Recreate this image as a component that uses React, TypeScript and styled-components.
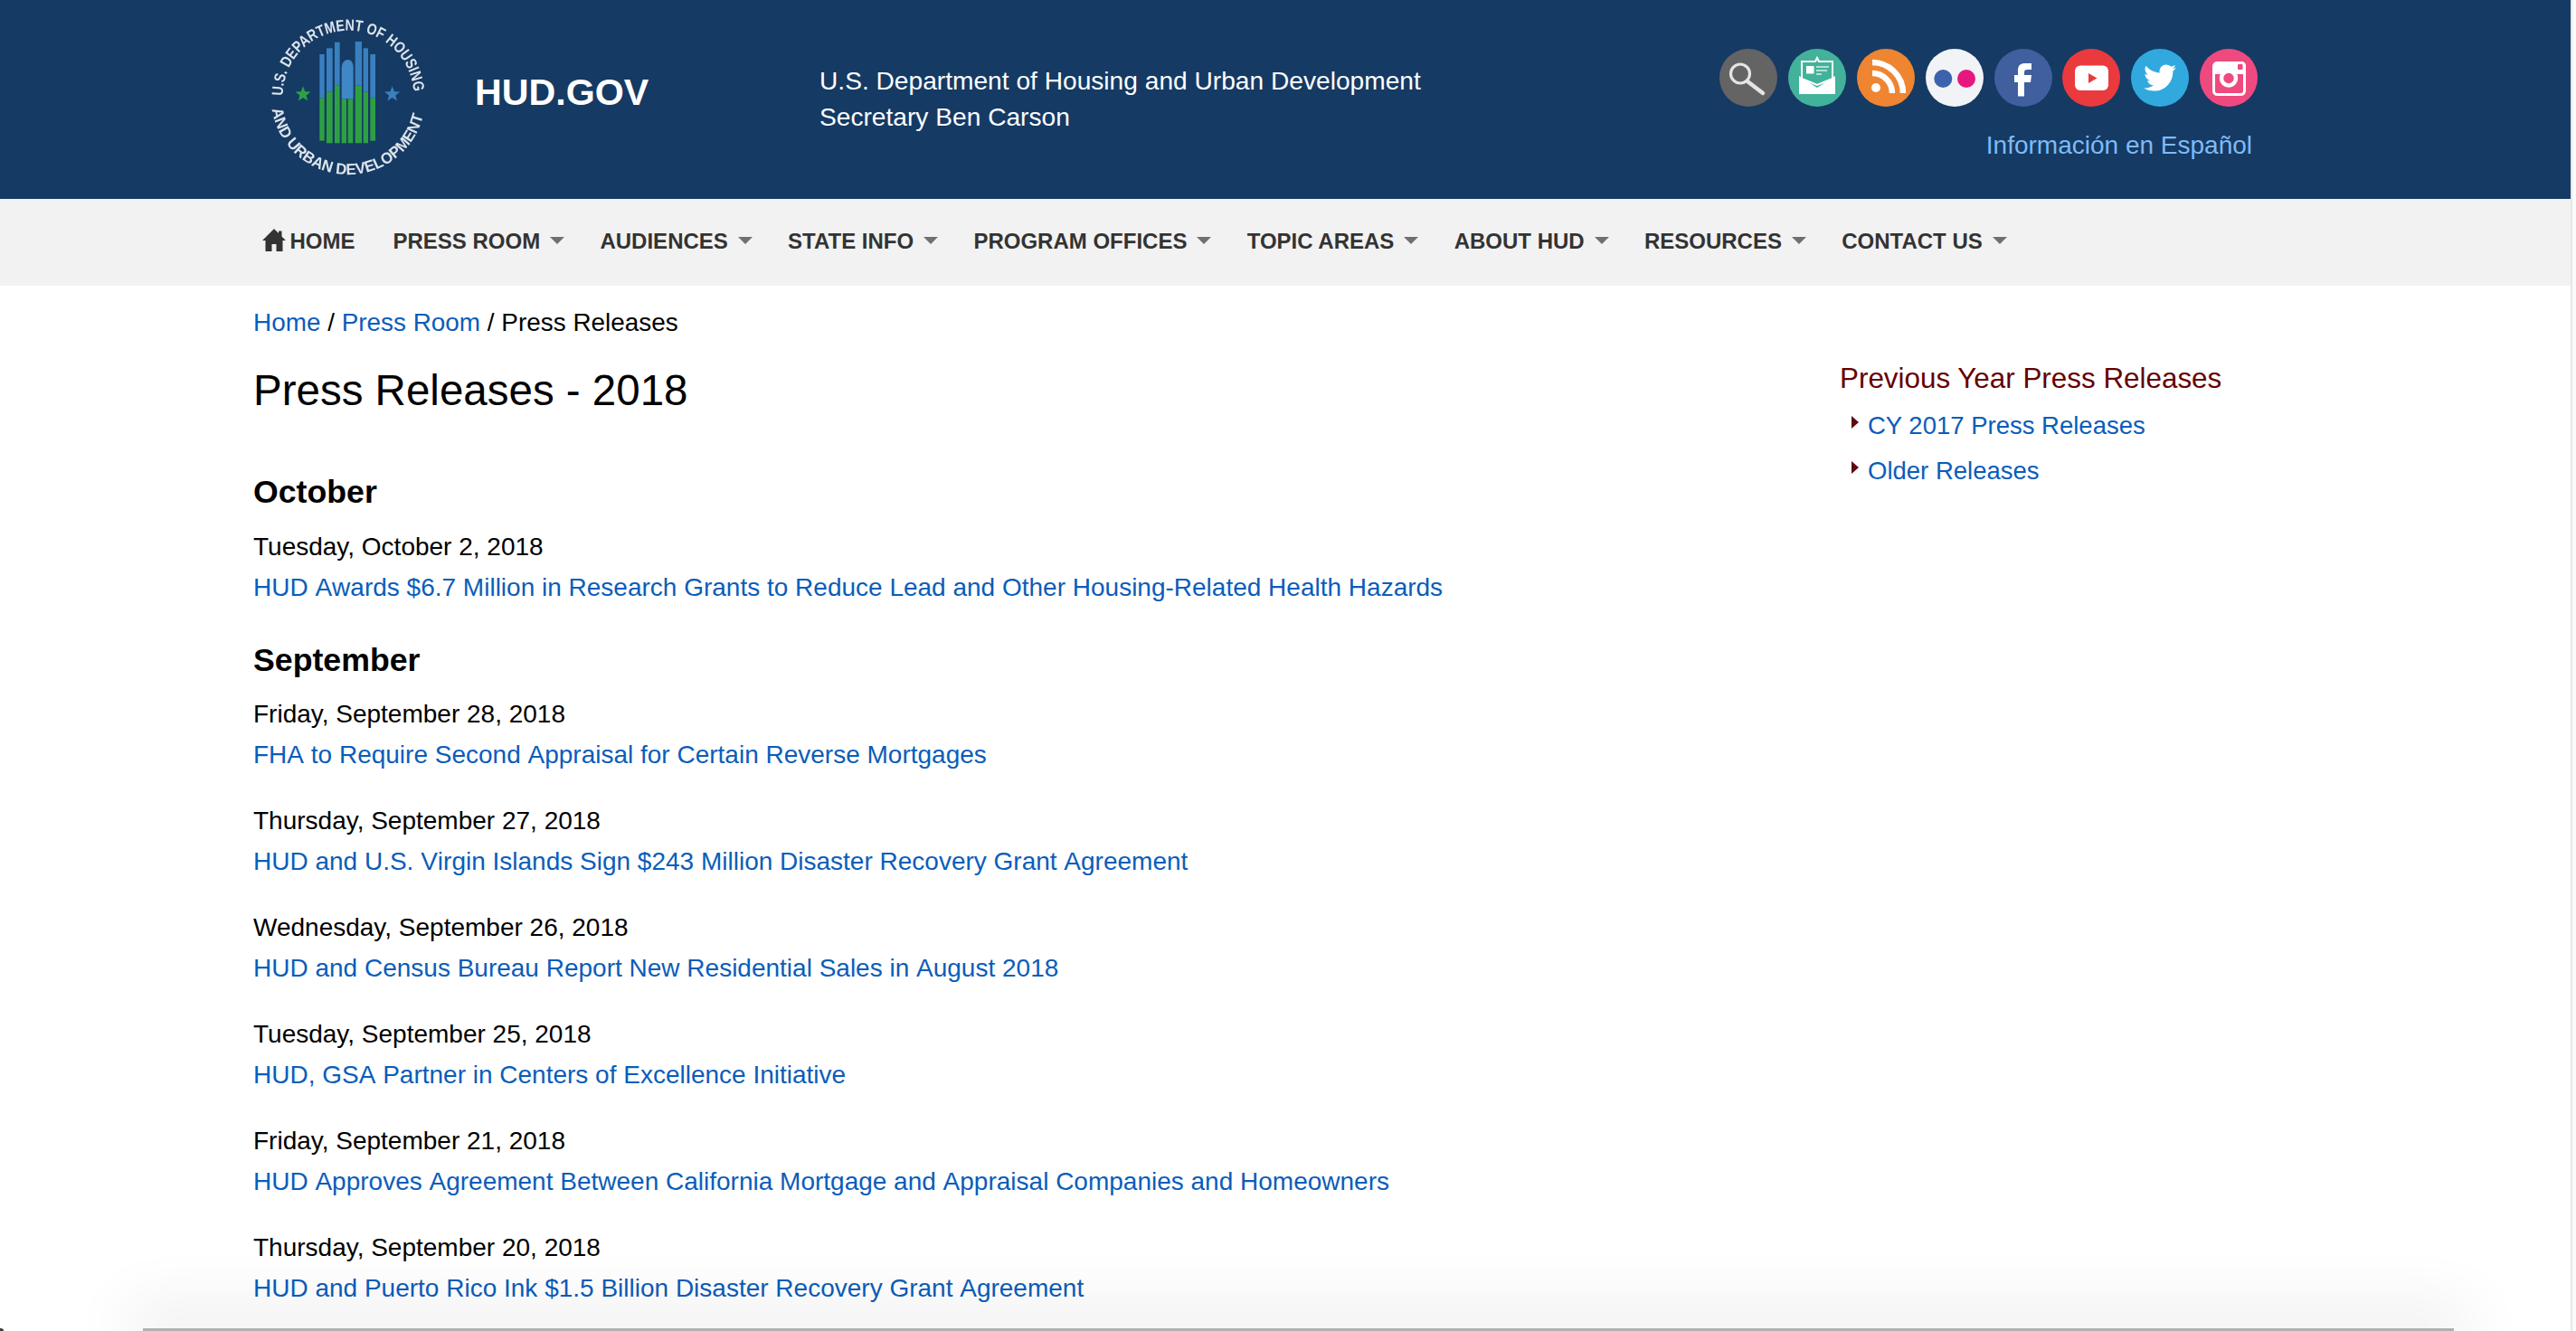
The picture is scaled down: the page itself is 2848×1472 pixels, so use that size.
import React from "react";
import styled, { createGlobalStyle } from "styled-components";
import { FaTwitter } from "react-icons/fa";

const Global = createGlobalStyle`
  html, body { margin: 0; padding: 0; height: 1472px; overflow: hidden; background: #fff; }
  body { font-family: "Liberation Sans", Arial, sans-serif; color: #000; }
  a { text-decoration: none; color: #0a5dba; }
`;

const Shell = styled.div`
  display: flex;
  height: 1472px;
  overflow: hidden;
  position: relative;
`;
const Page = styled.div`
  flex: 1;
  min-width: 0;
`;
const ScrollTrack = styled.div`
  width: 6px;
  box-sizing: border-box;
  border-left: 2px solid #e6e6e6;
  background: #fafafa;
`;
const WindowShadow = styled.div`
  position: absolute;
  left: 158px;
  right: 135px;
  bottom: 0;
  height: 3px;
  background: #b0b0b0;
  box-shadow: 0 -4px 70px 18px rgba(0, 0, 0, 0.09);
  pointer-events: none;
`;
const DesktopCorner = styled.div`
  position: absolute;
  left: 0;
  bottom: 0;
  width: 4px;
  height: 3px;
  background: #4a3a36;
  border-top-right-radius: 4px;
  pointer-events: none;
`;

const Header = styled.header`
  height: 220px;
  background: #153a64;
  display: flex;
  align-items: flex-start;
  padding: 10px 346px 0 280px;
  box-sizing: border-box;
  color: #fff;
`;
const Seal = styled.svg`
  width: 200px;
  height: 190px;
  flex: none;
  filter: blur(0.45px);
`;
const Brand = styled.div`
  font-size: 41.2px;
  font-weight: bold;
  line-height: 50px;
  margin: 67px 0 0 45px;
  width: 381px;
  flex: none;
`;
const Agency = styled.div`
  font-size: 28.15px;
  line-height: 40px;
  margin-top: 60px;
`;
const HeaderRight = styled.div`
  margin-left: auto;
  display: flex;
  flex-direction: column;
  align-items: flex-end;
  padding-top: 44px;
`;
const Socials = styled.div`
  display: flex;
  gap: 11.8px;
`;
const Badge = styled.a<{ $bg: string }>`
  width: 64px;
  height: 64px;
  border-radius: 50%;
  background: ${(p) => p.$bg};
  color: #fff;
  display: flex;
  align-items: center;
  justify-content: center;
  filter: blur(0.35px);
  svg { display: block; }
`;
const Spanish = styled.a`
  margin: 23px 6px 0 0;
  font-size: 28px;
  line-height: 40px;
  color: #7fbaf5;
`;

const Nav = styled.nav`
  height: 96px;
  background: #f2f2f2;
  display: flex;
  align-items: center;
  padding: 0 0 2px 290px;
  box-sizing: border-box;
`;
const NavItem = styled.a`
  display: flex;
  align-items: center;
  font-size: 24px;
  font-weight: bold;
  color: #333;
  margin-right: 39.25px;
  white-space: nowrap;
  &:first-child { margin-right: 42px; }
`;
const HomeIcon = styled.svg`
  width: 26px;
  height: 25px;
  margin: -3px 4.5px 0 0;
  fill: #333;
  flex: none;
`;
const Caret = styled.span`
  width: 0;
  height: 0;
  margin: -2px 0 0 11px;
  border-left: 8px solid transparent;
  border-right: 8px solid transparent;
  border-top: 8px solid #707070;
`;

const Content = styled.div`
  display: flex;
  padding-left: 280px;
`;
const Main = styled.main`
  width: 1754px;
  flex: none;
`;
const Crumbs = styled.div`
  font-size: 27.9px;
  line-height: 44px;
  margin-top: 19px;
`;
const Title = styled.h1`
  font-size: 47.5px;
  line-height: 58px;
  font-weight: normal;
  margin: 24px 0 0;
`;
const Month = styled.h2`
  font-size: 35.7px;
  line-height: 44px;
  font-weight: bold;
  margin: 36px 0 16px;
  ${Title} + & { margin: 61px 0 17px; }
`;
const Entry = styled.div`
  font-size: 28px;
  line-height: 44.5px;
  margin-bottom: 29px;
  & > a { display: block; font-kerning: none; }
  &:last-child { margin-bottom: 0; }
`;

const Side = styled.aside`
  padding-top: 79px;
  flex: none;
`;
const SideTitle = styled.h3`
  font-size: 31.4px;
  line-height: 48px;
  font-weight: normal;
  color: #660000;
  margin: 0 0 3px;
`;
const SideLink = styled.a`
  display: flex;
  align-items: center;
  height: 50px;
  font-size: 27.5px;
  padding-left: 13px;
  &::before {
    content: "";
    width: 0;
    height: 0;
    margin: -8px 10px 0 0;
    border-top: 7px solid transparent;
    border-bottom: 7px solid transparent;
    border-left: 8px solid #5c0a10;
  }
`;

const bars = [
  { x: 220, w: 16, top: 150, mid: 295, bot: 437 },
  { x: 243, w: 20, top: 130, mid: 275, bot: 445 },
  { x: 270, w: 17, top: 110, mid: 253, bot: 445 },
  { x: 338, w: 22, top: 108, mid: 253, bot: 445 },
  { x: 365, w: 16, top: 130, mid: 275, bot: 445 },
  { x: 388, w: 17, top: 150, mid: 295, bot: 437 },
];
const star = (cx: number, cy: number, r: number) =>
  Array.from({ length: 10 }, (_, i) => {
    const a = (Math.PI / 5) * i - Math.PI / 2;
    const rr = i % 2 ? r * 0.42 : r;
    return `${cx + rr * Math.cos(a)},${cy + rr * Math.sin(a)}`;
  }).join(" ");

const SealMark = () => (
  <Seal viewBox="0 0 600 570">
    <defs>
      <path id="sealTop" d="M 98 288 A 217 217 0 0 1 532 288" />
      <path id="sealBottom" d="M 62 332 A 256 256 0 0 0 568 332" />
    </defs>
    <text fill="#dfe5ec" fontFamily="Liberation Sans" fontWeight="bold" fontSize="52">
      <textPath href="#sealTop" textLength="668" lengthAdjust="spacingAndGlyphs">U.S. DEPARTMENT OF HOUSING</textPath>
    </text>
    <text fill="#dfe5ec" fontFamily="Liberation Sans" fontWeight="bold" fontSize="52">
      <textPath href="#sealBottom" textLength="704" lengthAdjust="spacingAndGlyphs">AND URBAN DEVELOPMENT</textPath>
    </text>
    {bars.map((b) => (
      <g key={b.x}>
        <rect x={b.x} y={b.top} width={b.w} height={b.mid - b.top} fill="#3a80bf" />
        <rect x={b.x} y={b.mid} width={b.w} height={b.bot - b.mid} fill="#2ea043" />
      </g>
    ))}
    <path d="M293 298 V195 C293 180 302 168 314 168 C326 168 332 180 332 195 V298Z" fill="#3f87c5" />
    <rect x="293" y="298" width="16" height="147" fill="#2ea043" />
    <rect x="314" y="298" width="17" height="147" fill="#2ea043" />
    <polygon points={star(165, 283, 27)} fill="#2ea043" />
    <polygon points={star(461, 283, 27)} fill="#3a80bf" />
  </Seal>
);

const SearchGlyph = () => (
  <svg width="64" height="64" viewBox="0 0 64 64" fill="none" stroke="#e4e4e4" strokeLinecap="round">
    <circle cx="23" cy="27.5" r="10.5" strokeWidth="3.2" />
    <path d="M31 36 L48 49" strokeWidth="4.5" />
  </svg>
);
const MailGlyph = () => (
  <svg width="64" height="64" viewBox="0 0 64 64">
    <path d="M12 30 L32 43 L52 30 V50 H12Z" fill="#fff" />
    <path d="M15 14 H30 L32 10 L34 14 H49 V33 L32 40 L15 33Z" fill="#42b39a" stroke="#fff" strokeWidth="2" />
    <rect x="20" y="19" width="8.5" height="8.5" fill="#fff" />
    <path d="M31 20 H45 M31 24 H43 M31 28 H37" stroke="#d8f0ea" strokeWidth="1.6" />
  </svg>
);
const RssGlyph = () => (
  <svg width="64" height="64" viewBox="0 0 64 64" fill="none" stroke="#fff" strokeWidth="6.5">
    <circle cx="21" cy="43" r="5" fill="#fff" stroke="none" />
    <path d="M17 27 A 22 22 0 0 1 39 49" />
    <path d="M17 15 A 34 34 0 0 1 51 49" />
  </svg>
);
const FlickrGlyph = () => (
  <svg width="64" height="64" viewBox="0 0 64 64">
    <circle cx="19.3" cy="33" r="10" fill="#3d62ad" />
    <circle cx="45" cy="33" r="10" fill="#e6187f" />
  </svg>
);
const FacebookGlyph = () => (
  <svg width="64" height="64" viewBox="0 0 64 64">
    <path d="M26 52.5 V37 H22 V29 H26 V24 C26 18 29 16 34 16 H41 V23 H36.5 C34 23 33 24 33 26 V29 H41 L40 37 H33 V52.5Z" fill="#fff" />
  </svg>
);
const YoutubeGlyph = () => (
  <svg width="64" height="64" viewBox="0 0 64 64">
    <rect x="14" y="18.5" width="37" height="27.5" rx="6" fill="#fff" />
    <path d="M29 27 L38.5 32.5 L29 38Z" fill="#ea3a3d" />
  </svg>
);
const InstagramGlyph = () => (
  <svg width="64" height="64" viewBox="0 0 64 64">
    <rect x="15.5" y="15.5" width="34" height="35" rx="4" fill="none" stroke="#fff" strokeWidth="3" />
    <path d="M15 28 V19 C15 16 17 14 20 14 H46 C49 14 51 16 51 19 V28 H41 A 11 11 0 0 0 23 28Z" fill="#fff" />
    <rect x="42" y="17" width="5.5" height="6" rx="1" fill="#ef4a7f" />
    <circle cx="32" cy="32.5" r="8" fill="none" stroke="#fff" strokeWidth="4.5" />
  </svg>
);

const navItems = ["PRESS ROOM", "AUDIENCES", "STATE INFO", "PROGRAM OFFICES", "TOPIC AREAS", "ABOUT HUD", "RESOURCES", "CONTACT US"];

const october = [
  { date: "Tuesday, October 2, 2018", title: "HUD Awards $6.7 Million in Research Grants to Reduce Lead and Other Housing-Related Health Hazards" },
];
const september = [
  { date: "Friday, September 28, 2018", title: "FHA to Require Second Appraisal for Certain Reverse Mortgages" },
  { date: "Thursday, September 27, 2018", title: "HUD and U.S. Virgin Islands Sign $243 Million Disaster Recovery Grant Agreement" },
  { date: "Wednesday, September 26, 2018", title: "HUD and Census Bureau Report New Residential Sales in August 2018" },
  { date: "Tuesday, September 25, 2018", title: "HUD, GSA Partner in Centers of Excellence Initiative" },
  { date: "Friday, September 21, 2018", title: "HUD Approves Agreement Between California Mortgage and Appraisal Companies and Homeowners" },
  { date: "Thursday, September 20, 2018", title: "HUD and Puerto Rico Ink $1.5 Billion Disaster Recovery Grant Agreement" },
];

const EntryList = ({ items }: { items: { date: string; title: string }[] }) => (
  <div>
    {items.map((i) => (
      <Entry key={i.date}>
        {i.date}
        <a href="#">{i.title}</a>
      </Entry>
    ))}
  </div>
);

export default function App() {
  return (
    <Shell>
      <Global />
      <Page>
        <Header>
          <SealMark />
          <Brand>HUD.GOV</Brand>
          <Agency>
            U.S. Department of Housing and Urban Development
            <br />
            Secretary Ben Carson
          </Agency>
          <HeaderRight>
            <Socials>
              <Badge $bg="#646464"><SearchGlyph /></Badge>
              <Badge $bg="#42b39a"><MailGlyph /></Badge>
              <Badge $bg="#ef8530"><RssGlyph /></Badge>
              <Badge $bg="#f2f3f6"><FlickrGlyph /></Badge>
              <Badge $bg="#3f5f9f"><FacebookGlyph /></Badge>
              <Badge $bg="#ea3a3d"><YoutubeGlyph /></Badge>
              <Badge $bg="#31a9df"><FaTwitter size={36} /></Badge>
              <Badge $bg="#ef4a7f"><InstagramGlyph /></Badge>
            </Socials>
            <Spanish href="#">Información en Español</Spanish>
          </HeaderRight>
        </Header>
        <Nav>
          <NavItem href="#">
            <HomeIcon viewBox="0 0 26 25">
              <path d="M13 0 L18 5 V2.5 H21.5 V8.5 L26 13 H22.5 V25 H15.5 V17 H10.5 V25 H3.5 V13 H0Z" />
            </HomeIcon>
            HOME
          </NavItem>
          {navItems.map((n) => (
            <NavItem href="#" key={n}>
              {n}
              <Caret />
            </NavItem>
          ))}
        </Nav>
        <Content>
          <Main>
            <Crumbs>
              <a href="#">Home</a> / <a href="#">Press Room</a> / Press Releases
            </Crumbs>
            <Title>Press Releases - 2018</Title>
            <Month>October</Month>
            <EntryList items={october} />
            <Month>September</Month>
            <EntryList items={september} />
          </Main>
          <Side>
            <SideTitle>Previous Year Press Releases</SideTitle>
            <SideLink href="#">CY 2017 Press Releases</SideLink>
            <SideLink href="#">Older Releases</SideLink>
          </Side>
        </Content>
      </Page>
      <ScrollTrack />
      <WindowShadow />
      <DesktopCorner />
    </Shell>
  );
}
